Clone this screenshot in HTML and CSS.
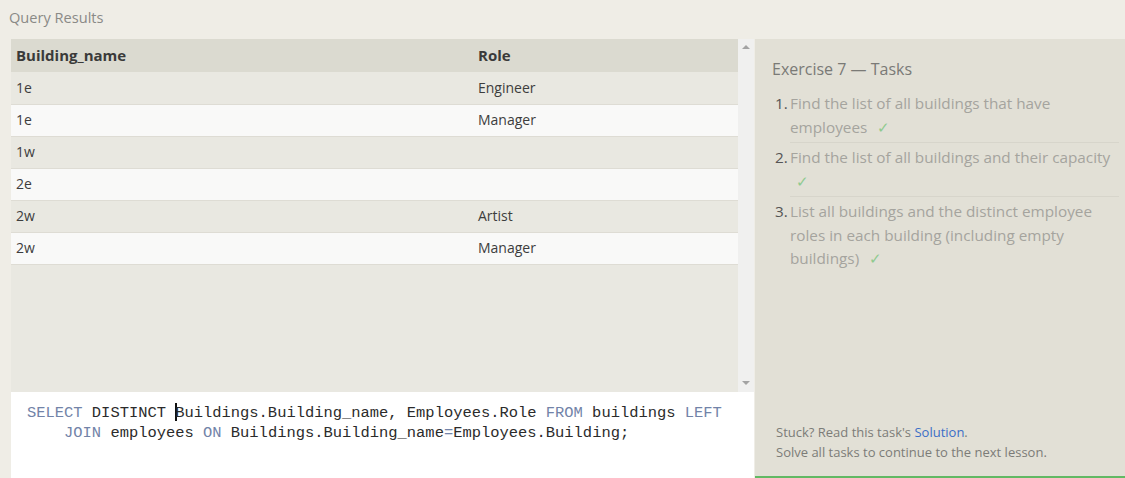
FILE: index.html
```html
<!DOCTYPE html>
<html>
<head>
<meta charset="utf-8">
<link rel="stylesheet" href="styles.css">
</head>
<body>
<div class="app">
  <div class="topbar">Query Results</div>
  <div class="main">
    <div class="left">
      <div class="results">
        <div class="table-wrap">
          <table class="grid">
            <thead>
              <tr><th class="c1">Building_name</th><th>Role</th></tr>
            </thead>
            <tbody>
              <tr><td>1e</td><td>Engineer</td></tr>
              <tr><td>1e</td><td>Manager</td></tr>
              <tr><td>1w</td><td></td></tr>
              <tr><td>2e</td><td></td></tr>
              <tr><td>2w</td><td>Artist</td></tr>
              <tr><td>2w</td><td>Manager</td></tr>
            </tbody>
          </table>
        </div>
        <div class="scrollbar">
          <span class="arrow up"></span>
          <span class="arrow down"></span>
        </div>
      </div>
      <div class="editor">
<pre class="code"><span class="kw">SELECT</span> DISTINCT <span class="cursor"></span>Buildings.Building_name, Employees.Role <span class="kw">FROM</span> buildings <span class="kw">LEFT</span>
    <span class="kw">JOIN</span> employees <span class="kw">ON</span> Buildings.Building_name<span class="kw">=</span>Employees.Building;</pre>
      </div>
    </div>
    <div class="right">
      <div class="tasks">
        <h2 class="title">Exercise 7 — Tasks</h2>
        <ol class="list">
          <li><span class="num">1.</span>Find the list of all buildings that have employees <span class="check">✓</span></li>
          <li><span class="num">2.</span>Find the list of all buildings and their capacity <span class="check">✓</span></li>
          <li><span class="num">3.</span>List all buildings and the distinct employee roles in each building (including empty buildings) <span class="check">✓</span></li>
        </ol>
      </div>
      <div class="footer">
        <div>Stuck? Read this task's <a class="link" href="#">Solution</a>.</div>
        <div>Solve all tasks to continue to the next lesson.</div>
      </div>
    </div>
  </div>
</div>
</body>
</html>
```

FILE: styles.css
```css
html, body {
  margin: 0;
  padding: 0;
}
body {
  background: #efede6;
  font-family: "Open Sans", "Noto Sans", sans-serif;
  color: #333;
  width: 1125px;
  height: 478px;
  overflow: hidden;
}
.app {
  display: flex;
  flex-direction: column;
  height: 478px;
}
.topbar {
  height: 39px;
  box-sizing: border-box;
  padding: 7px 0 0 9px;
  font-size: 14.6px;
  color: #8a8a86;
  line-height: 20px;
}
.main {
  flex: 1;
  display: flex;
  padding-left: 11px;
  min-height: 0;
}
.left {
  width: 743px;
  display: flex;
  flex-direction: column;
}
.results {
  height: 353px;
  display: flex;
  background: #e9e8e1;
}
.table-wrap {
  width: 727px;
}
.grid {
  width: 100%;
  border-collapse: collapse;
  font-size: 14px;
}
.grid th {
  background: #dbdad0;
  text-align: left;
  font-weight: 700;
  font-size: 15px;
  color: #3a3a3a;
  height: 33px;
  padding: 0 5px 1px;
  box-sizing: border-box;
}
.grid th.c1 {
  width: 462px;
}
.grid td {
  height: 32px;
  padding: 0 5px 1px;
  box-sizing: border-box;
  color: #3d3d3d;
  border-bottom: 1px solid #dedcd4;
}
.grid tbody tr:nth-child(odd) td {
  background: #e9e8e1;
}
.grid tbody tr:nth-child(even) td {
  background: #f9f9f8;
}
.scrollbar {
  width: 16px;
  background: #f0f0ef;
  display: flex;
  flex-direction: column;
  justify-content: space-between;
  align-items: center;
  padding: 6px 0 7px;
  box-sizing: border-box;
}
.arrow {
  width: 0;
  height: 0;
  border-left: 4px solid transparent;
  border-right: 4px solid transparent;
}
.arrow.up {
  border-bottom: 4px solid #a3a3a3;
}
.arrow.down {
  border-top: 4px solid #a3a3a3;
}
.editor {
  flex: 1;
  background: #ffffff;
  padding: 11px 0 0 16px;
}
.code {
  margin: 0;
  font-family: "Liberation Mono", "DejaVu Sans Mono", monospace;
  font-size: 15.45px;
  line-height: 20px;
  color: #2b2b2b;
}
.kw {
  color: #7283a8;
}
.cursor {
  display: inline-block;
  width: 0;
  height: 18px;
  border-left: 2px solid #111;
  vertical-align: -4px;
  margin-right: -2px;
}
.right {
  flex: 1;
  margin-left: 1px;
  background: #e2e0d6;
  border-bottom: 2px solid #62b964;
  display: flex;
  flex-direction: column;
  justify-content: space-between;
}
.tasks {
  padding: 18px 6px 0 17px;
}
.title {
  margin: 0 0 11px;
  font-size: 16px;
  font-weight: 400;
  color: #7a7a76;
  line-height: 24px;
}
.list {
  list-style: none;
  margin: 0;
  padding: 0;
}
.list li {
  font-size: 15.3px;
  line-height: 23.5px;
  color: #a5a49e;
  padding-bottom: 3px;
  margin-bottom: 3px;
  border-bottom: 1px solid #d7d5cb;
  margin-left: 18px;
}
.list li:last-child {
  border-bottom: none;
}
.num {
  display: inline-block;
  width: 15px;
  margin-left: -15px;
  color: #555;
}
.check {
  display: inline-block;
  color: #8fca8f;
  margin-left: 6px;
  line-height: 18px;
}
.footer {
  padding: 0 0 14px 21px;
  font-size: 13px;
  line-height: 20px;
  color: #7c7c78;
}
.link {
  color: #3b6ec7;
  text-decoration: none;
}
```
